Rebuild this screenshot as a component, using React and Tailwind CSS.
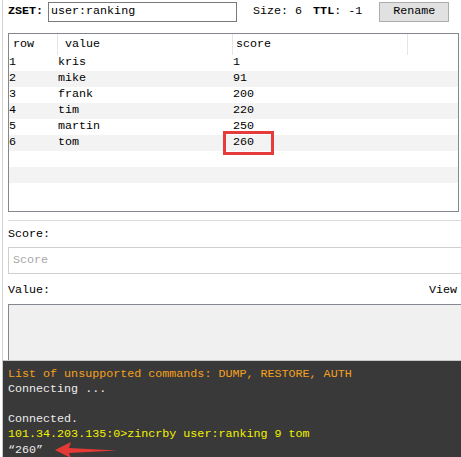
const rows = [
  { row: "1", value: "kris", score: "1" },
  { row: "2", value: "mike", score: "91" },
  { row: "3", value: "frank", score: "200" },
  { row: "4", value: "tim", score: "220" },
  { row: "5", value: "martin", score: "250" },
  { row: "6", value: "tom", score: "260" },
  { row: "", value: "", score: "" },
  { row: "", value: "", score: "" },
];

export default function App() {
  return (
    <div className="relative w-[461px] h-[457px] overflow-hidden bg-white text-[11.7px] text-black font-['Liberation_Mono',monospace]">
      <div className="ml-[2px] h-[360px] border-l border-[#d4d4d4] pl-[5px] flex flex-col">
        {/* key bar */}
        <div className="flex items-center h-[24px]">
          <span className="font-bold w-[40px]">ZSET:</span>
          <div className="w-[189px] h-[20px] border border-[#7a7a7a] flex items-center pl-[2px]">
            user:ranking
          </div>
          <span className="ml-[16px]">Size: 6</span>
          <span className="ml-[11px]"><b>TTL</b>: -1</span>
          <button className="ml-[17px] w-[70px] h-[20px] bg-[#e1e1e1] border border-[#adadad] flex items-center justify-center">
            Rename
          </button>
        </div>

        {/* table */}
        <div className="relative mt-[9px] w-[451px] h-[179px] border border-[#828790]">
          <div className="flex h-[21px] items-center">
            <div className="w-[49px] h-full border-r border-[#e5e5e5] pl-[4px] flex items-center">row</div>
            <div className="w-[175px] h-full border-r border-[#e5e5e5] pl-[7px] flex items-center">value</div>
            <div className="w-[175px] h-full border-r border-[#e5e5e5] pl-[3px] flex items-center">score</div>
          </div>
          {rows.map((r, i) => (
            <div key={i} className={"flex h-[16px] items-center " + (i % 2 ? "bg-[#f3f3f3]" : "bg-white")}>
              <div className="w-[49px]">{r.row}</div>
              <div className="w-[175px]">{r.value}</div>
              <div className="w-[175px]">{r.score}</div>
            </div>
          ))}
          {/* highlight */}
          <div className="absolute left-[214px] top-[97px] w-[51px] h-[24px] border-[3px] border-[#e63b3b]" />
        </div>

        <div className="mt-[8px] h-[1px] bg-[#dcdcdc] mr-[-10px]" />

        <div className="mt-[7px] h-[14px] flex items-center">Score:</div>
        <div className="mt-[5px] h-[27px] mr-[-10px] border border-[#cfcfcf] flex items-center pl-[4px] text-[#a8a8a8]">
          Score
        </div>

        <div className="mt-[10px] h-[14px] flex items-center justify-between pr-[4px]">
          <span>Value:</span>
          <span>View</span>
        </div>
        <div className="mt-[6px] flex-1 mr-[-10px] bg-[#f0f0f0] border-l border-t border-[#828790]" />
      </div>

      {/* console */}
      <div className="h-[97px] ml-[2px] border-t border-l border-[#c8c8c8] bg-[#393939] pl-[5px] pt-[6px] leading-[15px] text-[#ececec]">
        <div className="text-[#f5a01e]">List of unsupported commands: DUMP, RESTORE, AUTH</div>
        <div>Connecting ...</div>
        <div>&nbsp;</div>
        <div>Connected.</div>
        <div className="text-[#f2f200]">101.34.203.135:0&gt;zincrby user:ranking 9 tom</div>
        <div className="flex items-center">
          <span>“260”</span>
          <svg width="63" height="16" viewBox="0 0 63 16" className="ml-[12px]">
            <polygon points="0,8 16,0 14,6 62,8.5 14,11 16,16" fill="#e53935" />
          </svg>
        </div>
      </div>
    </div>
  );
}
